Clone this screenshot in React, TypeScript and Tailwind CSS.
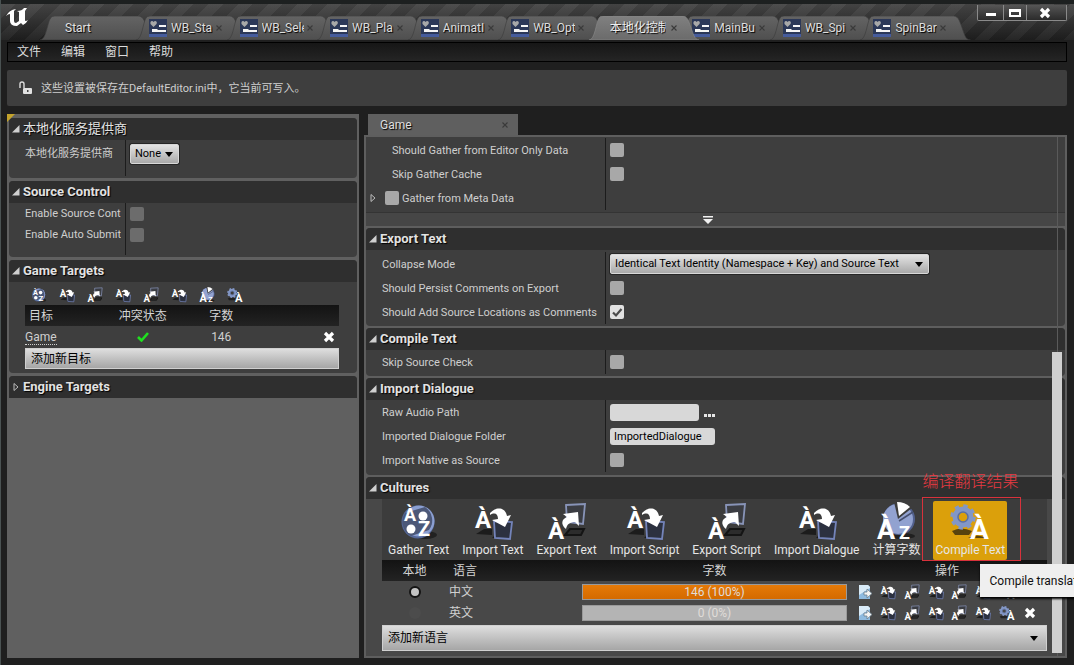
import React from "react";

type IconProps = { className: string };

const letter = {
  fontFamily: "Roboto, 'Liberation Sans', sans-serif",
  fontWeight: 700,
  fill: "#fff",
};

function GatherIcon({ className }: IconProps) {
  return (
    <svg viewBox="0 0 40 40" className={className} aria-hidden="true">
      <ellipse cx="26" cy="33" rx="12" ry="4" fill="#151515" opacity="0.7" />
      <circle cx="19" cy="20" r="16.500" fill="#55689a" />
      <circle cx="20" cy="19" r="15.500" fill="#8b9fd2" />
      <path d="M6 11A16 16 0 0 0 12 34L30 28A16 16 0 0 0 26 5Z" fill="#4c5878" />
      <circle cx="24" cy="14" r="4.500" fill="#fff" />
      <circle cx="12" cy="27" r="4.500" fill="#fff" />
      <text x="5" y="19" fontSize="18" {...letter}>À</text>
      <text x="19" y="34" fontSize="20" {...letter}>Z</text>
    </svg>
  );
}

function ImportIcon({ className }: IconProps) {
  return (
    <svg viewBox="0 0 40 40" className={className} aria-hidden="true">
      <path d="M3 32l8-5h8v6zM19 36l6-6h11l-3 6z" fill="#141414" opacity="0.8" />
      <path d="M21 19l18 1-2 17-15-1z" fill="#2c3140" stroke="#7484ba" strokeWidth="1.800" />
      <text x="2" y="26" fontSize="24" {...letter}>À</text>
      <path d="M17 11c8-8 16-4 17 3l4-1-6 12-13-7 6-1c0-5-3-7-8-4z" fill="#fff" />
    </svg>
  );
}

function ExportIcon({ className }: IconProps) {
  return (
    <svg viewBox="0 0 40 40" className={className} aria-hidden="true">
      <path d="M18 33l5-6h14l-3 6z" fill="#2c2c2c" stroke="#141414" strokeWidth="2" />
      <path d="M19 3l19-1-2 20-16-2z" fill="#3b3d43" stroke="#8894b8" strokeWidth="1.800" />
      <text x="1" y="37" fontSize="24" {...letter}>À</text>
      <path d="M16 12l15-2 1 14-4-4c-5 0-8 2-9 7-6-5-4-10 1-12z" fill="#fff" />
    </svg>
  );
}

function CountIcon({ className }: IconProps) {
  return (
    <svg viewBox="0 0 40 40" className={className} aria-hidden="true">
      <ellipse cx="26" cy="34" rx="13" ry="3" fill="#141414" opacity="0.7" />
      <circle cx="23" cy="17" r="16" fill="#52618e" />
      <circle cx="22" cy="17" r="15" fill="#92a2d0" />
      <path d="M22 17L18 0H30L36 6Z" fill="#3c3c3c" />
      <path d="M23 14L21 0Q29 0 34 5Z" fill="#fff" />
      <path d="M23 19L37 10" stroke="#46506f" strokeWidth="1.500" />
      <text x="1" y="37" fontSize="27" {...letter}>À</text>
      <text x="23" y="37" fontSize="18" {...letter}>Z</text>
    </svg>
  );
}

function CompileIcon({ className }: IconProps) {
  return (
    <svg viewBox="0 0 40 40" className={className} aria-hidden="true">
      <path d="M2 29q9-5 20 0l-3 4H5zM18 36q9-5 18 0z" fill="#111" opacity="0.65" />
      <circle cx="13" cy="15" r="7.500" fill="none" stroke="#8397c6" strokeWidth="6" />
      <circle cx="13" cy="15" r="10.700" fill="none" stroke="#8397c6" strokeWidth="4" strokeDasharray="4.200 4.200" />
      <circle cx="13" cy="15" r="5" fill="none" stroke="#5d709d" strokeWidth="1.500" />
      <text x="20" y="37" fontSize="28" {...letter}>À</text>
    </svg>
  );
}

function EditIcon({ className }: IconProps) {
  return (
    <svg viewBox="0 0 16 16" className={className} aria-hidden="true">
      <path d="M2 1h9l2 2v12H2z" fill="#8fbbe0" />
      <path d="M2 1h9l2 2v1L2 11z" fill="#d9ebf8" />
      <path d="M7 8h3V5l5 4.500-5 4.500v-3H7z" fill="#f4f4f4" stroke="#6b7f8e" strokeWidth="0.800" />
    </svg>
  );
}

function CrossIcon({ className }: IconProps) {
  return (
    <svg viewBox="0 0 12 12" className={className} aria-hidden="true">
      <path d="M2 2l8 8M10 2l-8 8" stroke="#fff" strokeWidth="3.2" />
    </svg>
  );
}

function CloseGlyph() {
  return (
    <svg viewBox="0 0 8 8" className="size-2 shrink-0" aria-hidden="true">
      <path d="M1.500 1.500l5 5M6.500 1.500l-5 5" stroke="#3a3a3a" strokeWidth="1.100" />
    </svg>
  );
}

function WidgetIcon() {
  return (
    <svg viewBox="0 0 18 18" className="size-[18px] shrink-0" aria-hidden="true">
      <rect width="18" height="18" fill="#2c3858" />
      <rect y="15" width="18" height="3" fill="#465c9c" />
      <path d="M4.500 8L1.500 5Q1 2 3 2q1 0 1.500 1Q5 2 6.500 2q2 .5 1 3z" fill="#a8a8a8" />
      <path d="M10 6h7v2h-7zM3 10h5l1 1h8v2H3z" fill="#f5f5f5" />
    </svg>
  );
}

function EngineLogo() {
  return (
    <svg viewBox="0 0 22 19" className="h-[19px] w-[22px]" aria-hidden="true">
      <path
        d="M0 8Q3 2 10 1L8 3v10q0 2 2 2l3-2V4l-2-1q5 0 7-3h3l-2 3v9q0 2 3 0-2 4-5 5l-2-2-4 3Q4 18 4 13V6Q2 6 0 8Z"
        fill="#fff"
      />
    </svg>
  );
}

function Arrow({ open = true }: { open?: boolean }) {
  return (
    <svg viewBox="0 0 8 8" className="size-2 shrink-0" aria-hidden="true">
      {open ? (
        <path d="M7.500 0v7.500H0z" fill="#d0d0d0" />
      ) : (
        <path d="M2 .5v7l4-3.500z" fill="none" stroke="#bbb" />
      )}
    </svg>
  );
}

function Section({
  title,
  open = true,
  light = false,
  children,
}: {
  title: string;
  open?: boolean;
  light?: boolean;
  children?: React.ReactNode;
}) {
  return (
    <section className="rounded-sm bg-[#3e3e3e]">
      <h2>
        <button
          aria-expanded={open}
          className="flex h-[22px] w-full items-center gap-[3px] rounded-t-sm bg-[#2f2f2f] pl-[3px] text-[13px] text-[#e2e2e2] [text-shadow:1px_1px_1px_#000]"
        >
          <Arrow open={open} />
          <span className={light ? "font-normal" : "font-bold"}>{title}</span>
        </button>
      </h2>
      {children}
    </section>
  );
}

function Check({ id, label, on = false, dim = false }: { id?: string; label?: string; on?: boolean; dim?: boolean }) {
  return (
    <span className="relative flex size-[14px] shrink-0">
      <input
        id={id}
        aria-label={label}
        type="checkbox"
        defaultChecked={on}
        className={
          dim
            ? "size-[14px] appearance-none rounded-xs bg-[#6c6c6c]"
            : "size-[14px] appearance-none rounded-xs bg-[#a8a8a8] checked:bg-[#e2e2e2]"
        }
      />
      {on && (
        <svg viewBox="0 0 14 14" className="pointer-events-none absolute inset-0 size-[14px]" aria-hidden="true">
          <path d="M3 7.500l3 3L11.500 4" fill="none" stroke="#4c4c4c" strokeWidth="2.200" />
        </svg>
      )}
    </span>
  );
}

function Drop({ id, value, wide = false }: { id: string; value: string; wide?: boolean }) {
  return (
    <span className={wide ? "relative flex w-[319px]" : "relative flex w-[49px]"}>
      <select
        id={id}
        className="h-5 w-full appearance-none rounded-xs border border-[#d8d8d8] bg-linear-to-b from-[#e4e4e4] to-[#a9a9a9] pl-1 text-[11px] text-black shadow-[0_0_0_1px_#262626]"
      >
        <option>{value}</option>
      </select>
      <svg viewBox="0 0 8 5" className="pointer-events-none absolute top-2 right-[6px] h-[5px] w-2" aria-hidden="true">
        <path d="M0 0h8L4 5z" fill="#000" />
      </svg>
    </span>
  );
}

function Row({
  id,
  label,
  indent = "pl-4",
  children,
}: {
  id: string;
  label: string;
  indent?: string;
  children: React.ReactNode;
}) {
  return (
    <div className="flex h-6">
      <label
        htmlFor={id}
        className={`flex w-60 shrink-0 items-center border-r border-[#1c1c1c] pt-px text-[11px] whitespace-nowrap ${indent}`}
      >
        {label}
      </label>
      <div className="flex items-center pl-1">{children}</div>
    </div>
  );
}

const tabs = [
  { title: "WB_Sta" },
  { title: "WB_Sele" },
  { title: "WB_Pla" },
  { title: "AnimatI" },
  { title: "WB_Opt" },
  { title: "本地化控制", active: true },
  { title: "MainBu" },
  { title: "WB_Spi" },
  { title: "SpinBar" },
];

function TabShape({ active = false }: { active?: boolean }) {
  return (
    <svg
      viewBox="0 0 110 24"
      preserveAspectRatio="none"
      className="absolute inset-y-0 -left-2 h-full w-[calc(100%+20px)]"
      aria-hidden="true"
    >
      <defs>
        <linearGradient id={active ? "tabOn" : "tabOff"} x1="0" y1="0" x2="0" y2="1">
          <stop offset="0" stopColor={active ? "#808080" : "#646464"} />
          <stop offset="1" stopColor={active ? "#6b6b6b" : "#4f4f4f"} />
        </linearGradient>
      </defs>
      <path
        d="M0 24C6 24 7 6 10 2Q11 0 14 0H93Q97 0 99 5C104 17 104 24 110 24Z"
        fill={active ? "url(#tabOn)" : "url(#tabOff)"}
        stroke={active ? "#8a8a8a" : "#3a3a3a"}
        strokeWidth="0.6"
      />
    </svg>
  );
}

const bigTools = [
  { label: "Gather Text", Icon: GatherIcon },
  { label: "Import Text", Icon: ImportIcon },
  { label: "Export Text", Icon: ExportIcon },
  { label: "Import Script", Icon: ImportIcon },
  { label: "Export Script", Icon: ExportIcon },
  { label: "Import Dialogue", Icon: ImportIcon },
  { label: "计算字数", Icon: CountIcon },
];

const cultures = [
  { name: "中文", count: "146 (100%)", percent: 100, native: true },
  { name: "英文", count: "0 (0%)", percent: 0, native: false },
];

const cultureTools = [
  { label: "Edit", Icon: EditIcon },
  { label: "Import Text", Icon: ImportIcon },
  { label: "Export Text", Icon: ExportIcon },
  { label: "Import Script", Icon: ImportIcon },
  { label: "Export Script", Icon: ExportIcon },
  { label: "Import Dialogue", Icon: ImportIcon },
  { label: "Compile Text", Icon: CompileIcon },
];

const headRow = "h-[21px] bg-linear-to-b from-[#131313] to-[#232323] text-[#d4d4d4]";
const lightButton = "border border-[#d0d0d0] bg-linear-to-b from-[#dedede] to-[#a6a6a6] text-black";

export default function App() {
  return (
    <div className="relative flex min-h-screen flex-col overflow-hidden border-l border-[#4a5252] bg-[#1f1f1f] pr-[7px] pb-[7px] pl-[6px] font-[Roboto,'Noto_Sans_CJK_SC',sans-serif] text-[12px] leading-4 text-[#cfcfcf]">
      <header className="-mr-[7px] -ml-[6px] flex h-10 border-t-4 border-[#1d2020] bg-[repeating-linear-gradient(135deg,#ffffff08_0_10px,#00000014_10px_21px),linear-gradient(#484848,#1f1f1f)] pl-[5px]">
        <div className="w-[38px] shrink-0 pt-1">
          <EngineLogo />
        </div>
        <nav aria-label="Tabs" className="flex min-w-0 flex-1 pt-3">
          <button className="relative ml-1 w-[96px] shrink-0 text-left">
            <TabShape />
            <span className="relative pl-[17px] text-[#e2e2e2] [text-shadow:1px_1px_1px_#000]">Start</span>
          </button>
          <div className="grid max-w-[815px] flex-1 grid-cols-9">
            {tabs.map((t) => (
              <button key={t.title} className={t.active ? "relative z-10 flex items-center" : "relative flex items-center"}>
                <TabShape active={t.active} />
                <span className="relative flex w-full items-center pl-[5px]">
                  {!t.active && <WidgetIcon />}
                  <span
                    className={
                      t.active
                        ? "ml-2 w-14 overflow-hidden text-left whitespace-nowrap text-[#eeeeee] [text-shadow:1px_1px_1px_#000]"
                        : "ml-1 w-[42px] overflow-hidden text-left whitespace-nowrap text-[#dddddd] [text-shadow:1px_1px_1px_#000]"
                    }
                  >
                    {t.title}
                  </span>
                  <span className={t.active ? "ml-1" : "ml-[2px]"}>
                    <CloseGlyph />
                  </span>
                </span>
              </button>
            ))}
          </div>
        </nav>
        <div className="mt-px mr-[7px] flex h-4 w-[90px] shrink-0 divide-x divide-[#8a8a8a] rounded-b-xs border border-t-0 border-[#8a8a8a] bg-linear-to-b from-[#565656] to-[#2b2b2b]">
          <button aria-label="Minimize" className="flex w-[26px] items-end justify-center pb-1">
            <span className="h-[3px] w-[10px] bg-white" />
          </button>
          <button aria-label="Maximize" className="flex w-[23px] items-center justify-center">
            <span className="h-2 w-3 border-2 border-t-[3px] border-white" />
          </button>
          <button aria-label="Close" className="flex flex-1 items-center justify-center pr-1">
            <CrossIcon className="size-3" />
          </button>
        </div>
      </header>

      <nav
        aria-label="Menu"
        className="mt-[2px] flex h-5 items-center gap-5 border border-black bg-linear-to-b from-[#161616] to-[#252525] pl-[9px] text-[#dcdcdc]"
      >
        <button>文件</button>
        <button>编辑</button>
        <button>窗口</button>
        <button>帮助</button>
      </nav>

      <div className="mt-2 flex h-9 items-center gap-2 rounded-xs bg-[#3e3e3e] pl-3">
        <svg viewBox="0 0 14 14" className="size-[14px]" aria-hidden="true">
          <path d="M1 7V3q0-2 2-2t2 2v4" fill="none" stroke="#ddd" strokeWidth="1.400" />
          <rect x="4" y="7" width="9" height="6" rx="1" fill="#e2e2e2" />
          <rect x="8" y="9" width="1.500" height="2" fill="#444" />
        </svg>
        <p className="pt-px text-[11px]">这些设置被保存在DefaultEditor.ini中，它当前可写入。</p>
      </div>

      <main className="mt-2 flex flex-1 gap-[5px]">
        <aside className="relative flex w-[352px] shrink-0 flex-col gap-[3px] bg-[#606060] px-[2px] pt-1">
          <svg viewBox="0 0 8 8" className="absolute top-0 left-0 size-2" aria-hidden="true">
            <path d="M0 0h8L0 8z" fill="#c3a32c" />
          </svg>
          <Section title="本地化服务提供商" light>
            <div className="flex h-[38px]">
              <label htmlFor="provider" className="mb-[2px] w-[117px] border-r border-[#1c1c1c] pt-[6px] pl-4 text-[11px]">
                本地化服务提供商
              </label>
              <div className="pt-1 pl-1">
                <Drop id="provider" value="None" />
              </div>
            </div>
          </Section>
          <Section title="Source Control">
            <div className="h-[54px]">
              {["Enable Source Control", "Enable Auto Submit"].map((label, i) => (
                <div key={label} className="flex h-[21px]">
                  <label
                    htmlFor={`sc-${i}`}
                    className="flex w-[117px] items-center border-r border-[#1c1c1c] pl-4 text-[11px] whitespace-nowrap"
                  >
                    <span className="w-24 overflow-hidden">{label}</span>
                  </label>
                  <div className="flex items-center pl-1">
                    <Check id={`sc-${i}`} dim />
                  </div>
                </div>
              ))}
              <div className="h-[10px] w-[117px] border-r border-[#1c1c1c]" />
            </div>
          </Section>
          <Section title="Game Targets">
            <div className="pr-[18px] pb-1 pl-4">
              <div className="flex h-[23px] items-center pt-[2px]">
                {[...bigTools, { label: "Compile Text", Icon: CompileIcon }].map(({ label, Icon }) => (
                  <button key={label} aria-label={label} className="flex w-7 justify-center">
                    <Icon className="size-4" />
                  </button>
                ))}
              </div>
              <table className="w-full table-fixed border-collapse">
                <thead>
                  <tr className={headRow}>
                    <th className="pl-1 text-left font-normal">目标</th>
                    <th className="font-normal">冲突状态</th>
                    <th className="font-normal">字数</th>
                    <th />
                  </tr>
                </thead>
                <tbody>
                  <tr className="h-[21px]">
                    <td>
                      <a href="#game" className="border-b border-dotted border-[#d0d0d0]">
                        Game
                      </a>
                    </td>
                    <td>
                      <svg viewBox="0 0 12 10" className="mx-auto h-[10px] w-3" aria-label="OK">
                        <path d="M1 5l3.500 3.500L11 1" fill="none" stroke="#1fe01f" strokeWidth="2.600" />
                      </svg>
                    </td>
                    <td className="text-center">146</td>
                    <td>
                      <button aria-label="Delete" className="ml-auto flex pr-1">
                        <CrossIcon className="size-3" />
                      </button>
                    </td>
                  </tr>
                </tbody>
              </table>
              <button className={`mt-px flex h-[21px] w-full items-center pl-[5px] ${lightButton}`}>添加新目标</button>
            </div>
          </Section>
          <Section title="Engine Targets" open={false} />
        </aside>

        <div className="flex min-w-0 flex-1 flex-col">
          <button className="ml-1 flex h-[21px] w-[150px] items-center justify-between bg-[#5f5f5f] pr-[9px] pl-3 text-[#dedede] [text-shadow:1px_1px_1px_#000]">
            Game
            <CloseGlyph />
          </button>
          <div className="relative flex flex-1 flex-col gap-[2px] border-2 border-[#5e5e5e] bg-[#5e5e5e]">
            <div className="bg-[#3e3e3e] pt-px">
              <Row id="editorOnly" label="Should Gather from Editor Only Data" indent="pl-[26px]">
                <Check id="editorOnly" />
              </Row>
              <Row id="skipCache" label="Skip Gather Cache" indent="pl-[26px]">
                <Check id="skipCache" />
              </Row>
              <div className="flex h-6 w-60 items-center border-r border-[#1c1c1c] pl-[3px]">
                <Arrow open={false} />
                <span className="mr-[3px] ml-2 flex">
                  <Check id="meta" />
                </span>
                <label htmlFor="meta" className="pt-px text-[11px]">
                  Gather from Meta Data
                </label>
              </div>
              <button
                aria-label="Show advanced"
                className="mt-[2px] flex h-[14px] w-full items-center justify-center border-t border-[#343434] bg-[#464646] pr-4"
              >
                <svg viewBox="0 0 12 8" className="h-2 w-3" aria-hidden="true">
                  <path d="M1 0h10v1.500H1zM1 3h10L6 8z" fill="#f0f0f0" />
                </svg>
              </button>
            </div>

            <Section title="Export Text">
              <div className="py-[2px]">
                <Row id="collapse" label="Collapse Mode">
                  <Drop id="collapse" value="Identical Text Identity (Namespace + Key) and Source Text" wide />
                </Row>
                <Row id="persist" label="Should Persist Comments on Export">
                  <Check id="persist" />
                </Row>
                <Row id="locations" label="Should Add Source Locations as Comments">
                  <Check id="locations" on />
                </Row>
              </div>
            </Section>

            <Section title="Compile Text">
              <div className="pb-[2px]">
                <Row id="skipSource" label="Skip Source Check">
                  <Check id="skipSource" />
                </Row>
              </div>
            </Section>

            <Section title="Import Dialogue">
              <div className="pb-[3px]">
                <Row id="rawAudio" label="Raw Audio Path">
                  <input id="rawAudio" type="text" className="h-[17px] w-[89px] rounded-[3px] bg-[#d8d8d8] px-1 text-[11px] text-black" />
                  <button aria-label="Browse" className="ml-[5px] flex gap-px pt-[6px]">
                    <span className="size-[3px] bg-[#e6e6e6]" />
                    <span className="size-[3px] bg-[#e6e6e6]" />
                    <span className="size-[3px] bg-[#e6e6e6]" />
                  </button>
                </Row>
                <Row id="dialogueFolder" label="Imported Dialogue Folder">
                  <input
                    id="dialogueFolder"
                    type="text"
                    defaultValue="ImportedDialogue"
                    className="h-[17px] w-[105px] rounded-[3px] bg-[#d8d8d8] px-1 text-[11px] text-black"
                  />
                </Row>
                <Row id="nativeSource" label="Import Native as Source">
                  <Check id="nativeSource" />
                </Row>
              </div>
            </Section>

            <Section title="Cultures">
              <div className="bg-[#484848] pr-[18px] pb-[5px] pl-4">
                <div className="flex h-[61px] items-end gap-px bg-[#3c3c3c] text-[#e6e6e6] [text-shadow:1px_1px_1px_#000]">
                  {bigTools.map(({ label, Icon }) => (
                    <button key={label} className="flex h-[59px] flex-col items-center px-[6px] pt-px whitespace-nowrap">
                      <Icon className="size-10" />
                      {label}
                    </button>
                  ))}
                  <div className="relative ml-[6px]">
                    <button className="flex h-[59px] flex-col items-center rounded-xs bg-[#dba00b] px-[2px] pt-px whitespace-nowrap">
                      <CompileIcon className="size-10" />
                      Compile Text
                    </button>
                    <span className="pointer-events-none absolute -top-[29px] -left-[11px] text-[16px] leading-5 font-light whitespace-nowrap text-[#e83a42] [text-shadow:none]">
                      编译翻译结果
                    </span>
                    <span className="pointer-events-none absolute -top-1 -left-[11px] h-[64px] w-[99px] border border-[#d8323c]" />
                    <span
                      role="tooltip"
                      className="absolute top-[63px] left-[47px] z-20 flex h-[33px] items-center bg-[#efefef] px-[9px] whitespace-nowrap text-[#111] shadow-[0_2px_2px_#000] [text-shadow:none]"
                    >
                      Compile translations
                    </span>
                  </div>
                </div>
                <table className="w-full table-fixed border-collapse">
                  <colgroup>
                    <col className="w-[65px]" />
                    <col className="w-[135px]" />
                    <col />
                    <col className="w-[200px]" />
                  </colgroup>
                  <thead>
                    <tr className={headRow}>
                      <th className="font-normal">本地</th>
                      <th className="pl-[6px] text-left font-normal">语言</th>
                      <th className="font-normal">字数</th>
                      <th className="font-normal">操作</th>
                    </tr>
                  </thead>
                  <tbody>
                    {cultures.map((c) => (
                      <tr key={c.name} className="h-[21px]">
                        <td className="text-center">
                          <input
                            type="radio"
                            name="native"
                            aria-label={c.name}
                            defaultChecked={c.native}
                            className="mx-auto block size-3 appearance-none rounded-full border-2 border-transparent bg-[#4c4c4c] checked:border-[#141414] checked:bg-[#c4c4c4]"
                          />
                        </td>
                        <td className="pl-[2px]">{c.name}</td>
                        <td>
                          <div
                            role="progressbar"
                            aria-label={c.name}
                            aria-valuenow={c.percent}
                            className="relative h-4 border border-[#9a9a9a] bg-[#b4b4b4]"
                          >
                            <div className="h-full bg-linear-to-b from-[#e57a08] to-[#d46a00]" style={{ width: `${c.percent}%` }} />
                            <span className="absolute inset-0 flex items-center justify-center text-[#e0dcd8]">{c.count}</span>
                          </div>
                        </td>
                        <td className="pr-[5px] pl-[6px]">
                          <div className="flex">
                            {cultureTools.map(({ label, Icon }) => (
                              <button key={label} aria-label={label} className="flex flex-1 justify-center">
                                <Icon className="size-4" />
                              </button>
                            ))}
                            <button aria-label="Delete" className="flex flex-1 items-center justify-center">
                              <CrossIcon className="size-3" />
                            </button>
                          </div>
                        </td>
                      </tr>
                    ))}
                  </tbody>
                </table>
                <button className={`mt-[2px] flex h-[26px] w-full items-center justify-between pr-2 pl-[5px] ${lightButton}`}>
                  添加新语言
                  <svg viewBox="0 0 8 5" className="h-[5px] w-2" aria-hidden="true">
                    <path d="M0 0h8L4 5z" fill="#000" />
                  </svg>
                </button>
              </div>
            </Section>

            <div className="pointer-events-none absolute inset-y-0 right-0 w-2 border-l border-[#5a5a5a]">
              <span className="absolute right-[3px] bottom-[3px] h-[301px] w-[10px] bg-[#d0d0d0]" />
            </div>
          </div>
        </div>
      </main>
    </div>
  );
}
